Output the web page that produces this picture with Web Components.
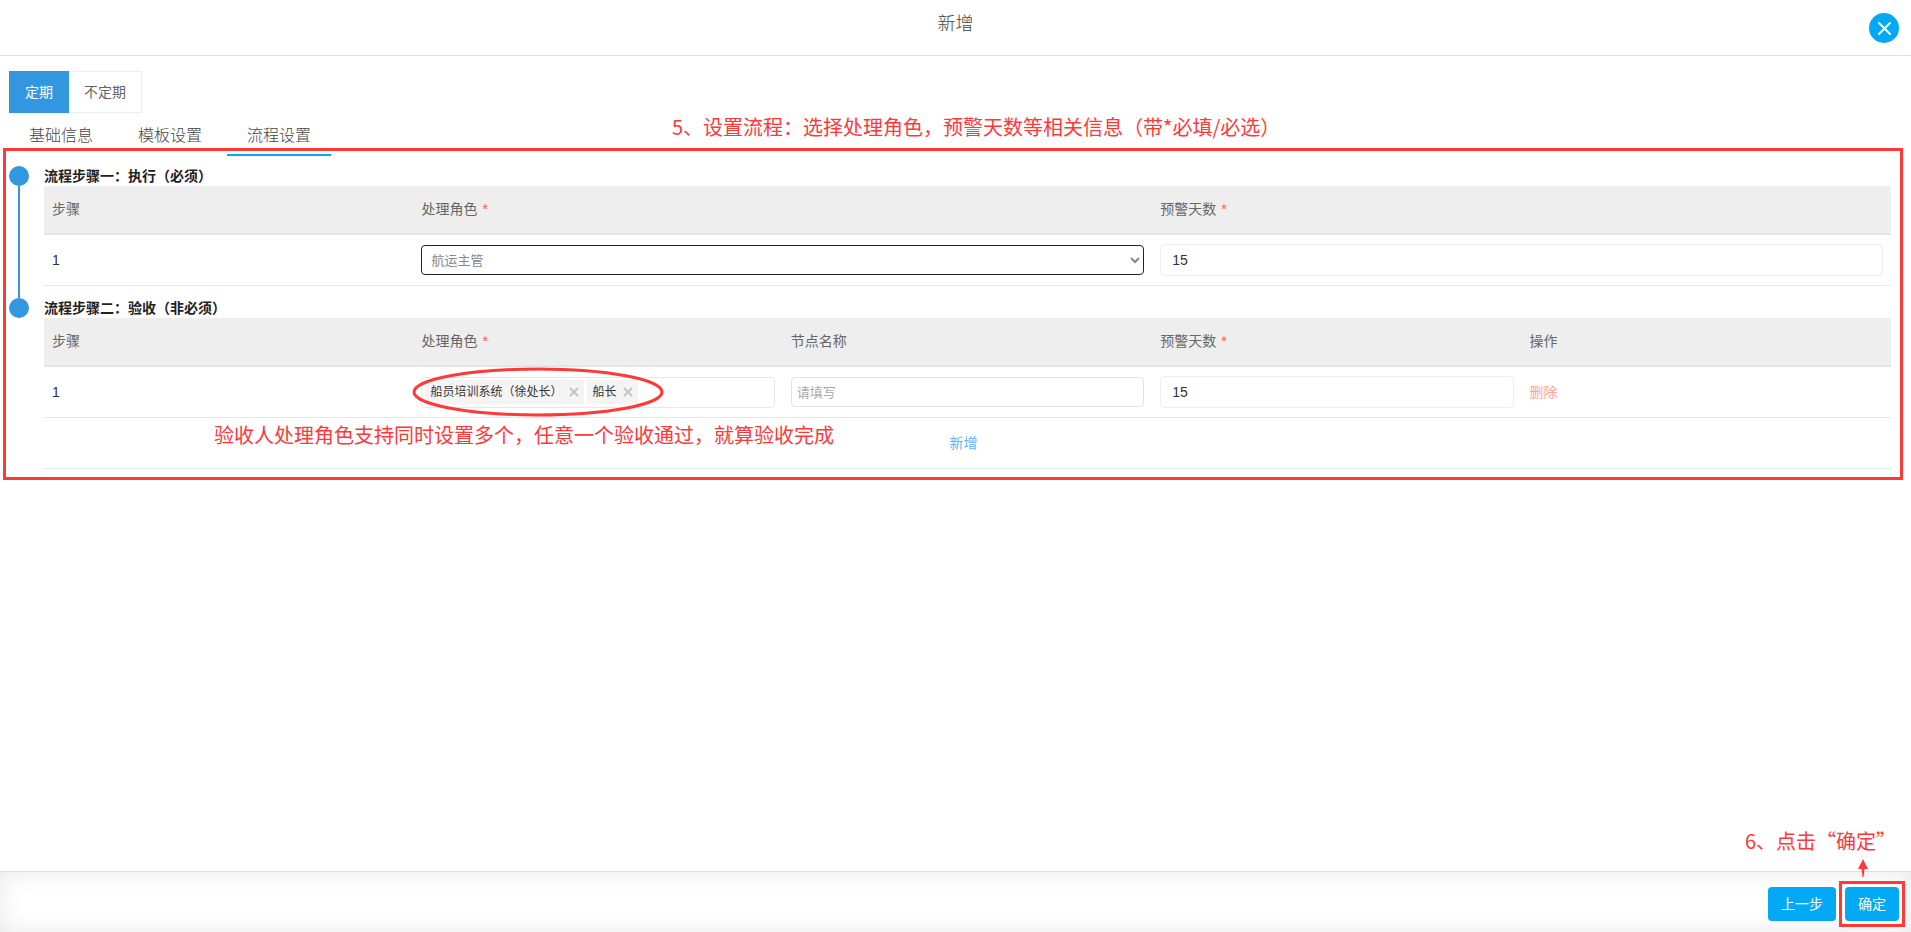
<!DOCTYPE html>
<html lang="zh-CN">
<head>
<meta charset="utf-8">
<meta name="viewport" content="width=device-width, initial-scale=1">
<title>新增</title>
<style>
  body {
    margin: 0;
    background: #fff;
    color: #666;
    font: 14px/20px "Liberation Sans", "Noto Sans CJK SC", sans-serif;
    --primary: #03a9f4;
    --step: #3296e1;
    --mark: #ff3838;
    --line: #e6e8ea;
  }
</style>
</head>
<body>
<schedule-dialog heading="新增">
  <kind-switch></kind-switch>
  <dialog-tabs></dialog-tabs>
  <flow-steps>
    <flow-step heading="流程步骤一：执行（必须）"><execute-table></execute-table></flow-step>
    <flow-step heading="流程步骤二：验收（非必须）" last><accept-table></accept-table></flow-step>
  </flow-steps>
  <dialog-actions slot="footer"></dialog-actions>
</schedule-dialog>

<script>
const define = (name, html, setup) => customElements.define(name, class extends HTMLElement {
  constructor() {
    super();
    const t = document.createElement('template');
    t.innerHTML = html;
    this.attachShadow({ mode: 'open' }).append(t.content.cloneNode(true));
  }
  connectedCallback() { if (setup) setup(this, this.shadowRoot); }
});

const base = `
  :host, *, *::before, *::after { box-sizing: border-box; }
  button, input, select { font: inherit; margin: 0; }
  button { cursor: pointer; padding: 0; }
`;

/* Red guidance text laid over the form */
define('guide-note', `<style>
  :host { display: block; position: absolute; color: var(--mark); white-space: nowrap;
          font: 20px/28px "Noto Sans CJK SC", sans-serif; pointer-events: none; }
</style><slot></slot>`);

define('schedule-dialog', `<style>${base}
  :host { display: flex; flex-direction: column; min-height: 100vh; }
  header { display: grid; grid-template-columns: 1fr auto 1fr; height: 56px;
           border-bottom: 1px solid #e2e2e2; }
  h1 { grid-column: 2; margin: 0; font-size: 18px; font-weight: 300; line-height: 48px; color: #444; }
  .close { justify-self: end; margin: 13px 12px 0 0; width: 30px; height: 30px; border: 0;
           border-radius: 50%; background: var(--primary); }
  svg { display: block; }
  main { flex: 1; padding: 15px 20px 15px 9px; }
</style>
<header><h1></h1><button class="close" type="button" aria-label="关闭">
  <svg width="30" height="30" viewBox="0 0 30 30" fill="none" stroke="#fff" stroke-width="2" stroke-linecap="round"><path d="M10 10 21 21M21 10 10 21"/></svg>
</button></header>
<main><slot></slot></main>
<slot name="footer"></slot>`, (el, root) => {
  root.querySelector('h1').textContent = el.getAttribute('heading');
});

define('kind-switch', `<style>${base}
  :host { display: flex; }
  button { height: 42px; padding: 0 15px; background: #fff; color: #666; border: 1px solid #eee; border-left: 0; }
  button.on { padding: 0 16px; border: 0; background: var(--step); color: #fff; }
</style><button type="button" class="on">定期</button><button type="button">不定期</button>`);

define('dialog-tabs', `<style>${base}
  :host { display: block; position: relative; margin-top: 4px; }
  nav { display: flex; gap: 5px; }
  a { padding: 0 20px; font-size: 16px; font-weight: 300; line-height: 37px; color: #444; text-decoration: none;
      border-bottom: 2px solid transparent; }
  a.on { border-color: var(--primary); position: relative; z-index: 2; }
  guide-note { left: 663px; top: -4px; }
</style>
<nav><a href="#base">基础信息</a><a href="#template">模板设置</a><a href="#flow" class="on">流程设置</a></nav>
<guide-note>5、设置流程：选择处理角色，预警天数等相关信息（带*必填/必选）</guide-note>`);

define('flow-steps', `<style>${base}
  :host { display: block; position: relative; margin-top: 10px; }
  .frame { position: absolute; inset: -18px -12px -11px -6px; border: 3px solid var(--mark); pointer-events: none; }
</style><slot></slot><div class="frame"></div>`);

define('flow-step', `<style>${base}
  :host { display: grid; grid-template-columns: 20px minmax(0, 1fr); column-gap: 15px; }
  .rail { display: flex; flex-direction: column; align-items: center; }
  .dot { width: 20px; height: 20px; border-radius: 50%; background: var(--step); }
  .line { flex: 1; width: 2px; background: var(--step); }
  .body { padding-bottom: 12px; }
  h2 { margin: 0; font-size: 14px; line-height: 20px; color: #222; }
  :host([last]) .line { display: none; }
  :host([last]) .body { padding-bottom: 0; }
</style>
<div class="rail"><div class="dot"></div><div class="line"></div></div>
<div class="body"><h2></h2><slot></slot></div>`, (el, root) => {
  root.querySelector('h2').textContent = el.getAttribute('heading');
});

const tableCss = `${base}
  :host { display: block; }
  table { width: 100%; table-layout: fixed; border-collapse: separate; border-spacing: 0; }
  th { height: 49px; padding: 0 8px 2px; text-align: left; font-weight: 400; background: #eee;
       border-bottom: 2px solid #e2e6ea; }
  td { height: 51px; padding: 0 8px; border-bottom: 1px solid var(--line); color: #333; position: relative; }
  th i { color: #ff5a4a; font-style: normal; margin-left: 5px; }
  input, select { display: block; width: 100%; height: 32px; border: 1px solid #eee; border-radius: 4px;
          background: #fff; color: #333; padding: 0 11px; outline: 0; }
  select { height: 30px; border-color: #222; color: #888; font-size: 13px; padding: 0 5px; }
  input.name { height: 30px; border-color: #e2e2e2; font-size: 13px; padding: 0 5px; }
  ::placeholder { color: #aaa; opacity: 1; }
  .narrow { width: 20%; }
`;

define('execute-table', `<style>${tableCss}</style>
<table>
  <thead><tr><th class="narrow">步骤</th><th>处理角色<i>*</i></th><th>预警天数<i>*</i></th></tr></thead>
  <tbody><tr>
    <td>1</td>
    <td><select aria-label="处理角色"><option>航运主管</option></select></td>
    <td><input type="text" inputmode="numeric" aria-label="预警天数" value="15"></td>
  </tr></tbody>
</table>`);

define('role-tag', `<style>${base}
  :host { display: flex; align-items: center; gap: 7px; height: 24px; padding: 0 5px; background: #f4f4f4;
          font-size: 12px; color: #333; white-space: nowrap; }
  button { width: 10px; height: 10px; border: 0; background: none; }
  svg { display: block; }
</style><span><slot></slot></span><button type="button" aria-label="移除">
<svg width="10" height="10" viewBox="0 0 10 10" fill="none" stroke="#c4c4c4" stroke-width="2"><path d="M1 1 9 9M9 1 1 9"/></svg></button>`);

define('role-picker', `<style>${base}
  :host { display: flex; align-items: center; gap: 3px; position: relative; height: 31px; padding: 0 3px;
          border: 1px solid var(--line); border-radius: 4px; }
  .ring { position: absolute; left: -10px; top: -12px; pointer-events: none; }
</style><slot></slot>
<svg class="ring" width="252" height="52" viewBox="0 0 252 52" fill="none" stroke="#ff3838" stroke-width="3"><ellipse cx="126" cy="26" rx="124" ry="23"/></svg>`);

define('accept-table', `<style>${tableCss}
  .del, .add { border: 0; background: none; color: #ffa299; }
  .add { display: block; margin: 0 auto; padding-right: 8px; color: #66b1ff; }
  guide-note { left: 170px; top: 3px; }
</style>
<table>
  <thead><tr><th>步骤</th><th>处理角色<i>*</i></th><th>节点名称</th><th>预警天数<i>*</i></th><th>操作</th></tr></thead>
  <tbody><tr>
    <td>1</td>
    <td><role-picker><role-tag>船员培训系统（徐处长）</role-tag><role-tag>船长</role-tag></role-picker></td>
    <td><input class="name" type="text" aria-label="节点名称" placeholder="请填写"></td>
    <td><input type="text" inputmode="numeric" aria-label="预警天数" value="15"></td>
    <td><button class="del" type="button">删除</button></td>
  </tr>
  <tr><td colspan="5"><button class="add" type="button">新增</button>
    <guide-note>验收人处理角色支持同时设置多个，任意一个验收通过，就算验收完成</guide-note></td></tr></tbody>
</table>`);

define('dialog-actions', `<style>${base}
  :host { display: flex; justify-content: flex-end; gap: 9px; height: 61px; padding: 15px 12px 0; position: relative;
          border-top: 1px solid #e0e0e0; box-shadow: inset 0 0 25px #e8e8e8; }
  button { height: 34px; padding: 0 13px; border: 0; border-radius: 4px; background: var(--primary); color: #fff; }
  .target { position: relative; height: 34px; }
  .frame { position: absolute; inset: -6px; border: 3px solid var(--mark); pointer-events: none; }
  .arrow { position: absolute; left: 13px; top: -28px; }
  guide-note { right: 3px; top: -60px; }
</style>
<button type="button">上一步</button>
<div class="target"><button type="button">确定</button><div class="frame"></div>
  <svg class="arrow" width="10" height="18" viewBox="0 0 10 18" fill="#ff3838"><path d="M5 0 10 10H6.500L5.500 18H4.500L3.500 10H0Z"/></svg>
  <guide-note>6、点击“确定”</guide-note></div>`);
</script>
</body>
</html>
